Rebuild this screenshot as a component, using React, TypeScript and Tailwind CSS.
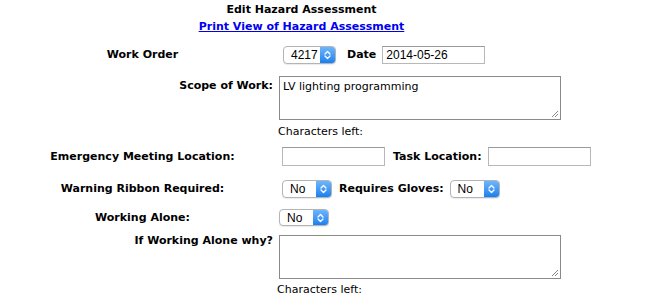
const label = "font-['DejaVu_Sans',sans-serif] text-[11px] font-bold leading-[14px] text-black";
const linkCls = "font-['DejaVu_Sans',sans-serif] text-[11px] font-bold leading-[14px] text-[#0000ee] underline";
const body = "font-['DejaVu_Sans',sans-serif] text-[11px] leading-[14px] text-black";

const Chevrons = () => (
  <svg width="7" height="10" viewBox="0 0 7 10" fill="none" stroke="white" strokeWidth="1.3" strokeLinecap="round" strokeLinejoin="round">
    <path d="M1 4 L3.5 1.5 L6 4" />
    <path d="M1 6 L3.5 8.5 L6 6" />
  </svg>
);

const Select = ({ value, className }: { value: string; className: string }) => (
  <div className={`flex overflow-hidden rounded-[4px] border border-[#b4b4b4] bg-white shadow-[0_1px_1px_rgba(0,0,0,0.08)] ${className}`}>
    <span className="flex flex-1 items-center pl-[7px] font-['Liberation_Sans',sans-serif] text-[12px] text-black">{value}</span>
    <span className="flex w-[15px] items-center justify-center bg-gradient-to-b from-[#6db5fb] to-[#1580f0]">
      <Chevrons />
    </span>
  </div>
);

const TextBox = ({ value, className }: { value?: string; className: string }) => (
  <div className={`flex items-center border border-[#b8b8b8] border-t-[#9a9a9a] bg-white pl-[3px] font-['Liberation_Sans',sans-serif] text-[12px] text-black ${className}`}>
    {value}
  </div>
);

const TextArea = ({ value }: { value?: string }) => (
  <div className={`relative h-[44px] w-[282px] border border-[#8a8a8a] bg-white px-[3px] pt-[3px] ${body}`}>
    {value}
    <svg className="absolute bottom-[1px] right-[1px]" width="8" height="8" viewBox="0 0 8 8" stroke="#888" strokeWidth="1">
      <path d="M7 1 L1 7" />
      <path d="M7 4 L4 7" />
    </svg>
  </div>
);

export default function App() {
  return (
    <div className="min-h-screen w-[656px] bg-white">
      <div className="flex w-[595px] flex-col pl-[8px]">
        <div className={`flex h-[20px] items-center justify-center ${label}`}>Edit Hazard Assessment</div>
        <div className="flex h-[14px] items-center justify-center">
          <a href="#" className={linkCls}>Print View of Hazard Assessment</a>
        </div>

        <div className="mt-[10px] flex h-[21px] items-center">
          <div className={`w-[269px] text-center ${label}`}>Work Order</div>
          <Select value="4217" className="ml-[6px] h-[18px] w-[53px]" />
          <span className={`ml-[11px] ${label}`}>Date</span>
          <TextBox value="2014-05-26" className="ml-[6px] h-[18px] w-[103px]" />
        </div>

        <div className="mt-[11px] flex items-start">
          <div className={`w-[269px] pr-[4px] pt-[3px] text-right ${label}`}>Scope of Work:</div>
          <div className="ml-[2px]">
            <TextArea value="LV lighting programming" />
          </div>
        </div>
        <div className={`mt-[5px] pl-[270px] ${body}`}>Characters left:</div>

        <div className="mt-[8px] flex h-[19px] items-center">
          <div className={`w-[269px] text-center ${label}`}>Emergency Meeting Location:</div>
          <TextBox className="ml-[5px] h-[19px] w-[103px]" />
          <span className={`ml-[8px] ${label}`}>Task Location:</span>
          <TextBox className="ml-[6px] h-[19px] w-[103px]" />
        </div>

        <div className="mt-[14px] flex h-[18px] items-center">
          <div className={`w-[269px] text-center ${label}`}>Warning Ribbon Required:</div>
          <Select value="No" className="ml-[5px] h-[18px] w-[50px]" />
          <span className={`ml-[7px] ${label}`}>Requires Gloves:</span>
          <Select value="No" className="ml-[6px] h-[18px] w-[50px]" />
        </div>

        <div className="mt-[11px] flex h-[17px] items-center">
          <div className={`w-[269px] text-center ${label}`}>Working Alone:</div>
          <Select value="No" className="ml-[2px] h-[17px] w-[50px]" />
        </div>

        <div className="mt-[9px] flex items-start">
          <div className={`-mt-[1px] w-[269px] pr-[4px] text-right ${label}`}>If Working Alone why?</div>
          <div className="ml-[2px]">
            <TextArea />
          </div>
        </div>
        <div className={`mt-[4px] pl-[269px] ${body}`}>Characters left:</div>
      </div>
    </div>
  );
}
